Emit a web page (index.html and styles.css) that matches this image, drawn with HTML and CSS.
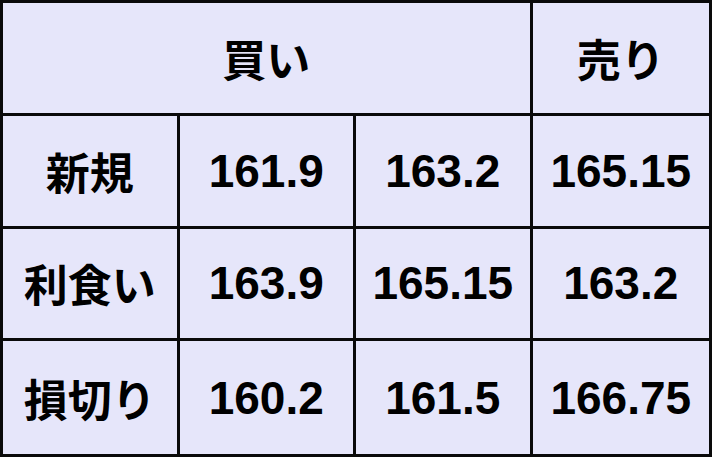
FILE: index.html
```html
<!DOCTYPE html>
<html lang="ja">
<head>
<meta charset="utf-8">
<title>売買価格表</title>
<link rel="stylesheet" href="styles.css">
</head>
<body>
<table class="price-table">
  <colgroup>
    <col class="col">
    <col class="col">
    <col class="col">
    <col class="col">
  </colgroup>
  <tr>
    <th class="head" colspan="3">買い</th>
    <th class="head">売り</th>
  </tr>
  <tr>
    <th class="label">新規</th>
    <td class="num">161.9</td>
    <td class="num">163.2</td>
    <td class="num">165.15</td>
  </tr>
  <tr>
    <th class="label">利食い</th>
    <td class="num">163.9</td>
    <td class="num">165.15</td>
    <td class="num">163.2</td>
  </tr>
  <tr>
    <th class="label">損切り</th>
    <td class="num">160.2</td>
    <td class="num">161.5</td>
    <td class="num">166.75</td>
  </tr>
</table>
</body>
</html>
```

FILE: styles.css
```css
html, body {
  margin: 0;
  padding: 0;
  background: #e6e6fa;
}

.price-table {
  box-sizing: border-box;
  width: 712px;
  height: 457px;
  border-collapse: separate;
  border-spacing: 0;
  border: 3px solid #0a0a0a;
  table-layout: fixed;
  background: #e6e6fa;
  color: #000;
}

.price-table .col {
  width: 25%;
}

.price-table tr {
  height: 25%;
}

.price-table th,
.price-table td {
  border-right: 3px solid #0a0a0a;
  border-bottom: 3px solid #0a0a0a;
  padding: 0;
  text-align: center;
  vertical-align: middle;
}

.price-table tr > :last-child {
  border-right: none;
}

.price-table tr:last-child > * {
  border-bottom: none;
}

.head,
.label {
  font-family: "Noto Sans CJK JP", "Noto Sans", sans-serif;
  font-size: 44px;
  font-weight: 700;
  line-height: 1;
}

.num {
  font-family: "Liberation Sans", Arial, sans-serif;
  font-size: 46px;
  font-weight: 700;
  line-height: 1;
}
```
